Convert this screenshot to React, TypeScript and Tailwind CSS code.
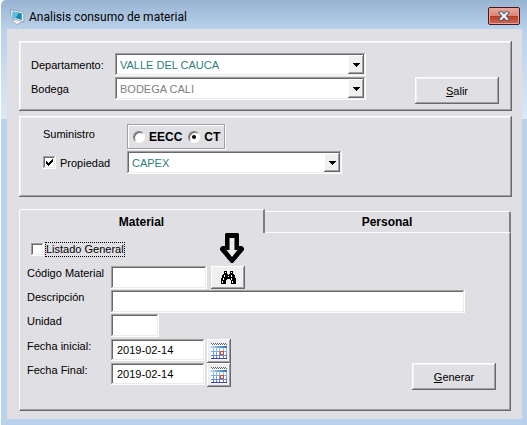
import type { ReactNode } from "react";

const RAISED =
  "shadow-[inset_-1px_-1px_#696969,inset_1px_1px_#ffffff,inset_-2px_-2px_#a0a0a0,inset_2px_2px_#f0f0f0]";
const SUNKEN =
  "bg-white shadow-[inset_-1px_-1px_#ffffff,inset_1px_1px_#a0a0a0,inset_-2px_-2px_#ececec,inset_2px_2px_#696969]";

function MonitorIcon() {
  return (
    <svg width="16" height="16" viewBox="0 0 16 16" aria-hidden="true">
      <path d="M2 11.5 9 9.5 13 12.5 6.500 15.500Z" fill="#eef1f3" stroke="#8b959c" strokeWidth=".6" />
      <path d="M.8.8 11.5 2.500 13.800 5v8L3 9.600 .8 7.500Z" fill="#f4f8fa" stroke="#7b8d9a" strokeWidth=".7" />
      <path d="M2.600 2.500 11.800 4.200v6.800L2.600 8.300Z" fill="#1787b0" />
      <path d="M2.600 2.500 9 3.700 5.500 9.100 2.600 8.300Z" fill="#5fbfd8" />
    </svg>
  );
}

function CloseIcon() {
  return (
    <svg width="12" height="10" viewBox="0 0 12 10" aria-hidden="true">
      <path d="M3 2 9 8M9 2 3 8" stroke="#4d5566" strokeWidth="4.200" strokeLinecap="square" />
      <path d="M3 2 9 8M9 2 3 8" stroke="#f3f3f5" strokeWidth="2.200" strokeLinecap="square" />
    </svg>
  );
}

function BinocularsIcon() {
  return (
    <svg width="15" height="13" viewBox="0 0 15 13" shapeRendering="crispEdges" aria-hidden="true">
      <path
        d="M3 0h3v3h1v1h1V3h1V0h3v3h1v1h1v3h1v6h-5V9H9V8H6v1H5v4H0V7h1V4h1V3h1Z"
        fill="#000"
      />
      <path d="M4 1h1v1H4zM3 4h1v2H3zM2 7h1v2H2zM1 10h1v2H1zM10 1h1v1h-1zM10 4h1v2h-1zM10 7h1v2h-1zM11 10h1v2h-1zM7 5h1v1H7z" fill="#fff" />
    </svg>
  );
}

function CalendarIcon() {
  return (
    <svg width="16" height="16" viewBox="0 0 16 16" shapeRendering="crispEdges" aria-hidden="true">
      <defs>
        <linearGradient id="calGrid" x1="0" y1="0" x2="0" y2="16" gradientUnits="userSpaceOnUse">
          <stop offset=".4" stopColor="#8ec2f2" />
          <stop offset=".9" stopColor="#5a78c4" />
          <stop offset="1" stopColor="#39339a" />
        </linearGradient>
        <linearGradient id="calHead" x1="0" y1="0" x2="16" y2="0" gradientUnits="userSpaceOnUse">
          <stop offset="0" stopColor="#b4d6f6" />
          <stop offset="1" stopColor="#2f6fc0" />
        </linearGradient>
      </defs>
      <path d="M0 1h16v15H0z" fill="#fff" />
      <path d="M0 0h1v1H0zM2 0h1v1H2zM4 0h1v1H4zM6 0h1v1H6zM8 0h1v1H8zM10 0h1v1h-1zM12 0h1v1h-1zM14 0h1v1h-1zM1 1h1v1H1zM3 1h1v1H3zM5 1h1v1H5zM7 1h1v1H7zM9 1h1v1H9zM11 1h1v1h-1zM13 1h1v1h-1zM15 1h1v1h-1z" fill="#5a6470" />
      <path d="M0 3h16v2H0z" fill="url(#calHead)" />
      <path
        d="M2 5h1v11H2zM5 5h1v11H5zM8 5h1v11H8zM12 5h1v11h-1zM15 5h1v11h-1zM0 8h16v1H0zM0 12h16v1H0zM0 15h16v1H0z"
        fill="url(#calGrid)"
      />
      <path d="M9.500 8.500h3v3h-3z" fill="#fff" stroke="#e0461f" />
    </svg>
  );
}

function DownArrow() {
  return (
    <svg width="24" height="30" viewBox="0 0 24 30" aria-hidden="true">
      <path d="M6 0h12l1 1v12h3l2 2v2L13 30h-2L0 17v-2l2-2h3V1Z" fill="#000" />
      <path d="M9.500 5h5v12h3L12 24l-5.500-7h3Z" fill="#ececf0" />
    </svg>
  );
}

function Combo({ id, value, width, tone }: { id: string; value: string; width: string; tone: string }) {
  return (
    <div className={`relative h-[23px] ${width}`}>
      <select id={id} className={`size-full appearance-none px-[5px] ${SUNKEN} ${tone}`}>
        <option>{value}</option>
      </select>
      <span
        className={`pointer-events-none absolute top-[2px] right-[2px] bottom-[2px] flex w-4 items-center justify-center bg-[#f0f0f0] ${RAISED}`}
      >
        <svg width="7" height="4" viewBox="0 0 7 4" shapeRendering="crispEdges" aria-hidden="true">
          <path d="M0 0h7v1H6v1H5v1H4v1H3V3H2V2H1V1H0z" />
        </svg>
      </span>
    </div>
  );
}

function CheckBox({ id, checked }: { id: string; checked?: boolean }) {
  return (
    <span className="relative flex size-[13px] shrink-0">
      <input id={id} type="checkbox" defaultChecked={checked} className={`peer size-full appearance-none ${SUNKEN}`} />
      <svg
        className="pointer-events-none invisible absolute inset-0 peer-checked:visible"
        width="13"
        height="13"
        viewBox="0 0 13 13"
        shapeRendering="crispEdges"
        aria-hidden="true"
      >
        <path d="M3 5h1v1h1v1h1V6h1V5h1V4h1V3h1v3H9v1H8v1H7v1H6v1H5V9H4V8H3z" />
      </svg>
    </span>
  );
}

function RadioOption({ id, label, checked }: { id: string; label: string; checked?: boolean }) {
  return (
    <span className="flex items-center gap-1">
      <span className="relative flex size-3">
        <input
          id={id}
          type="radio"
          name="suministro"
          defaultChecked={checked}
          className="peer size-full appearance-none rounded-full border border-t-[#808080] border-r-white border-b-white border-l-[#808080] bg-white shadow-[inset_1px_1px_#696969]"
        />
        <span className="pointer-events-none invisible absolute inset-1 rounded-full bg-black peer-checked:visible" />
      </span>
      <label htmlFor={id} className="text-[12px] font-bold">
        {label}
      </label>
    </span>
  );
}

function PushButton({ children }: { children: ReactNode }) {
  return <button className={`h-[27px] w-[84px] shrink-0 bg-[#e0dfe3] ${RAISED}`}>{children}</button>;
}

function DateRow({ id, label }: { id: string; label: string }) {
  return (
    <div className="flex">
      <label htmlFor={id} className="w-[84px]">
        {label}
      </label>
      <input id={id} type="text" defaultValue="2019-02-14" className={`mr-[2px] h-[22px] w-[94px] px-[6px] ${SUNKEN}`} />
      <button aria-label={`Calendario ${label}`} className={`flex h-6 w-6 items-center justify-center bg-[#f0f0f0] ${RAISED}`}>
        <CalendarIcon />
      </button>
    </div>
  );
}

export default function App() {
  return (
    <div className="bg-white pl-px font-['Liberation_Sans',Arial,sans-serif] text-[11px] leading-[14px] text-black">
      <div className="rounded-tl-[5px] bg-[linear-gradient(#98b4d2_0px,#b9d1ea_29px,#dce8f5_119px,#b9d1ea_119px)] pr-[5px] pb-[6px] pl-[6px]">
        <header className="flex h-[29px] items-center justify-between pt-[5px] pr-[2px] pl-[3px]">
          <h1 className="flex items-center gap-[3px] font-['Roboto','Open_Sans',sans-serif] text-[12px]">
            <MonitorIcon />
            Analisis consumo de material
          </h1>
          <button
            aria-label="Cerrar"
            className="mb-[3px] flex h-[18px] w-8 items-center justify-center rounded-[2px] border border-[#451722] bg-[linear-gradient(#e9a99f_0%,#d98474_48%,#b83a23_50%,#cf6a56_100%)] shadow-[inset_0_0_0_1px_#e9a59a]"
          >
            <CloseIcon />
          </button>
        </header>

        <main className="bg-[#e0dfe3] pt-3 pr-[10px] pb-2 pl-3">
          <section className={`flex items-end justify-between pt-3 pr-[13px] pb-[7px] pl-3 ${RAISED}`}>
            <div className="mb-1 grid grid-cols-[84px_auto] items-center gap-y-px">
              <label htmlFor="departamento">Departamento:</label>
              <Combo id="departamento" value="VALLE DEL CAUCA" width="w-[251px]" tone="text-[#2f7d78]" />
              <label htmlFor="bodega">Bodega</label>
              <Combo id="bodega" value="BODEGA CALI" width="w-[251px]" tone="text-[#808080]" />
            </div>
            <PushButton>
              <u>S</u>alir
            </PushButton>
          </section>

          <section className={`mt-[5px] grid grid-cols-[84px_auto] justify-start gap-y-[2px] pt-2 pb-[23px] pl-6 ${RAISED}`}>
            <span id="suministro" className="pt-[3px]">
              Suministro
            </span>
            <div
              role="radiogroup"
              aria-labelledby="suministro"
              className="flex h-[25px] w-[98px] items-center gap-[6px] border border-[#a0a0a0] pl-[5px] shadow-[1px_1px_#ffffff,inset_1px_1px_#ffffff]"
            >
              <RadioOption id="eecc" label="EECC" />
              <RadioOption id="ct" label="CT" checked />
            </div>
            <span className="flex items-center gap-1">
              <CheckBox id="propiedad" checked />
              <label htmlFor="propiedad">Propiedad</label>
            </span>
            <Combo id="capex" value="CAPEX" width="w-[215px]" tone="text-[#2f7d78]" />
          </section>

          <section className="mt-3 mr-px">
            <div role="tablist" className="grid h-6 grid-cols-2 text-[12px] font-bold">
              <button
                role="tab"
                aria-selected="true"
                className="rounded-tl-[3px] border-t border-r-2 border-l border-t-white border-r-[#808080] border-l-white"
              >
                Material
              </button>
              <button
                role="tab"
                aria-selected="false"
                className="mt-[2px] rounded-tr-[3px] border-t border-r-2 border-b border-t-white border-r-[#808080] border-b-white"
              >
                Personal
              </button>
            </div>

            <div
              role="tabpanel"
              className="relative border-r border-b border-l border-r-[#696969] border-b-[#696969] border-l-white pt-[9px] pr-[14px] pb-5 pl-[7px] shadow-[inset_-1px_-1px_#a0a0a0]"
            >
              <div className="mb-[9px] flex items-center gap-px pl-1">
                <CheckBox id="listado" />
                <label htmlFor="listado" className="border border-dotted border-black leading-[13px]">
                  Listado General
                </label>
              </div>
              <div className="absolute top-0 left-[200px]">
                <DownArrow />
              </div>

              <div className="grid grid-cols-[84px_auto] justify-start gap-y-px">
                <label htmlFor="codigo">Código Material</label>
                <div className="flex gap-1">
                  <input id="codigo" type="text" className={`h-[23px] w-24 px-[6px] ${SUNKEN}`} />
                  <button aria-label="Buscar" className={`flex h-[23px] w-[34px] items-center justify-center bg-[#f0f0f0] ${RAISED}`}>
                    <BinocularsIcon />
                  </button>
                </div>
                <label htmlFor="descripcion">Descripción</label>
                <input id="descripcion" type="text" className={`h-[23px] w-[354px] px-[6px] ${SUNKEN}`} />
                <label htmlFor="unidad">Unidad</label>
                <input id="unidad" type="text" className={`h-[23px] w-12 px-[6px] ${SUNKEN}`} />
              </div>

              <div className="mt-[2px] flex items-end justify-between">
                <div className="mb-[3px]">
                  <DateRow id="inicial" label="Fecha inicial:" />
                  <DateRow id="final" label="Fecha Final:" />
                </div>
                <PushButton>
                  <u>G</u>enerar
                </PushButton>
              </div>
            </div>
          </section>
        </main>
      </div>
    </div>
  );
}
